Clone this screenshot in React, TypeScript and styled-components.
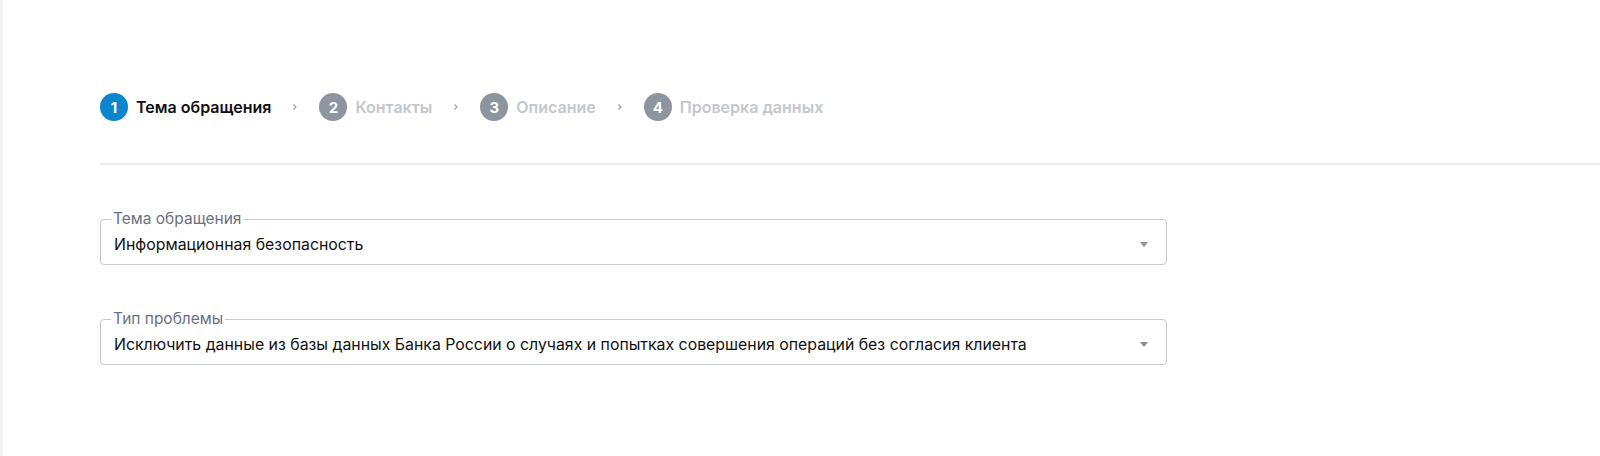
import styled, { createGlobalStyle, css } from 'styled-components';

const GlobalStyle = createGlobalStyle`
    html, body {
        margin: 0;
        padding: 0;
        background: #fff;
        font-family: Inter, "Noto Sans", "Liberation Sans", sans-serif;
    }
`;

const Page = styled.div`
    min-height: 456px;
    box-sizing: border-box;
    border-left: 3px solid #f1f1f2;
    padding: 93px 0 0 97px;
`;

const Stepper = styled.ol`
    display: flex;
    align-items: center;
    gap: 21px;
    margin: 0;
    padding: 0;
    list-style: none;
    height: 28px;
`;

const Step = styled.li`
    display: flex;
    align-items: center;
    gap: 8px;
`;

const StepCircle = styled.span<{ $active?: boolean }>`
    width: 28px;
    height: 28px;
    border-radius: 50%;
    display: flex;
    align-items: center;
    justify-content: center;
    background: #8f95a0;
    color: #fff;
    font-size: 15px;
    font-weight: 700;
    ${({ $active }) => $active && css`
        background: #0a86cf;
    `}
`;

const StepLabel = styled.span<{ $active?: boolean }>`
    font-size: 16px;
    font-weight: 600;
    color: #c3c7cf;
    ${({ $active }) => $active && css`
        color: #111;
    `}
`;

const Chevron = styled.svg`
    width: 6px;
    height: 8px;
    display: block;
    margin-left: 13px;
`;

const Divider = styled.hr`
    border: none;
    height: 2px;
    background: #ededee;
    margin: 42px 0 0;
`;

const Form = styled.div`
    display: flex;
    flex-direction: column;
    gap: 54px;
    padding-top: 54px;
    width: 1067px;
`;

const Field = styled.div`
    position: relative;
    height: 46px;
    box-sizing: border-box;
    border: 1.5px solid #c7cacf;
    border-radius: 4px;
    display: flex;
    align-items: center;
    padding: 5px 18px 0 13px;
`;

const Legend = styled.span`
    position: absolute;
    top: -10px;
    left: 10px;
    padding: 0 2px;
    background: #fff;
    font-size: 15.5px;
    line-height: 18px;
    color: #6b7180;
`;

const Value = styled.span`
    flex: 1;
    font-size: 15.85px;
    color: #111;
    white-space: nowrap;
`;

const Caret = styled.svg`
    width: 8px;
    height: 5px;
    display: block;
`;

const steps = ['Тема обращения', 'Контакты', 'Описание', 'Проверка данных'];

const fields = [
    { label: 'Тема обращения', value: 'Информационная безопасность' },
    {
        label: 'Тип проблемы',
        value: 'Исключить данные из базы данных Банка России о случаях и попытках совершения операций без согласия клиента',
    },
];

const App = () => (
    <>
        <GlobalStyle />
        <Page>
            <Stepper>
                {steps.map((s, i) => (
                    <Step key={s}>
                        <StepCircle $active={i === 0}>{i + 1}</StepCircle>
                        <StepLabel $active={i === 0}>{s}</StepLabel>
                        {i < steps.length - 1 && (
                            <Chevron viewBox="0 0 6 8">
                                <path d="M1.5 1.5 L4 4 L1.5 6.5" fill="none" stroke="#9aa0aa" strokeWidth="1.2" />
                            </Chevron>
                        )}
                    </Step>
                ))}
            </Stepper>
            <Divider />
            <Form>
                {fields.map(f => (
                    <Field key={f.label}>
                        <Legend>{f.label}</Legend>
                        <Value>{f.value}</Value>
                        <Caret viewBox="0 0 8 5">
                            <path d="M0 0 L8 0 L4 5 Z" fill="#8b909a" />
                        </Caret>
                    </Field>
                ))}
            </Form>
        </Page>
    </>
);

export default App;
